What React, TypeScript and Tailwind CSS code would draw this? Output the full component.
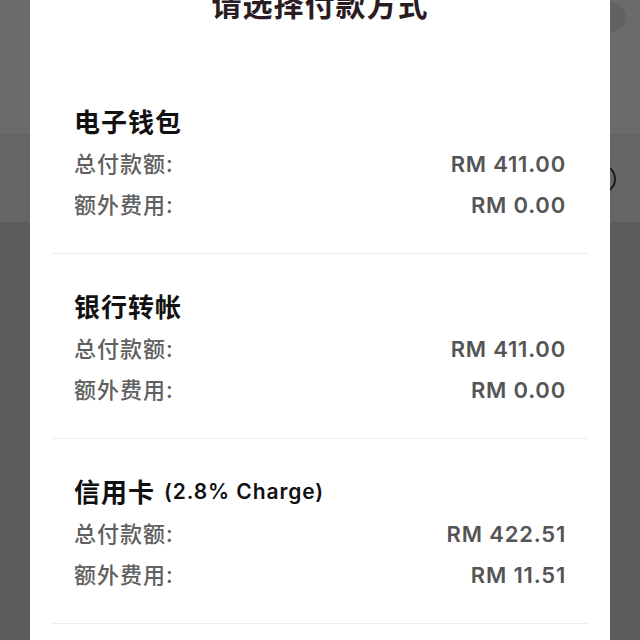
import React from "react";

const methods = [
  { name: "电子钱包", note: "", total: "RM 411.00", fee: "RM 0.00" },
  { name: "银行转帐", note: "", total: "RM 411.00", fee: "RM 0.00" },
  { name: "信用卡", note: "(2.8% Charge)", total: "RM 422.51", fee: "RM 11.51" },
];

export default function App() {
  return (
    <div
      className="relative w-[640px] h-[640px] overflow-hidden bg-[#5c5c5c]"
      style={{ fontFamily: "Inter, 'Noto Sans CJK SC', sans-serif" }}
    >
      {/* page behind the overlay */}
      <div className="h-[135px] bg-[#6b6b6b] border-b border-[#5e5e5e]" />
      <div className="h-[87px] bg-[#666666]" />

      <div className="absolute left-[586px] top-[164px] w-[30px] h-[30px] rounded-full border-2 border-[#1a1a1a]" />
      <div className="absolute left-[596px] top-[2px] w-[30px] h-[30px] rounded-full bg-[#626262]" />

      {/* payment sheet */}
      <div className="absolute left-[30px] top-0 w-[580px] h-[700px] bg-white px-[22px]">
        <div className="-mt-[15px] h-[40px] flex items-center justify-center text-[30px] font-semibold text-[#2b1b22] tracking-[1px]">
          请选择付款方式
        </div>

        {methods.map((m, i) => (
          <div
            key={m.name}
            className={`px-[22px] pb-[27px] border-b border-[#ececec] ${i === 0 ? "pt-[81px]" : "pt-[37px]"}`}
          >
            <div className="h-8 flex items-center gap-[9px] text-[#111]">
              <span className="text-[26px] font-semibold tracking-[1px]">{m.name}</span>
              {m.note && <span className="text-[21px] font-semibold tracking-[0.9px]">{m.note}</span>}
            </div>
            <div className="mt-[6px] h-[41px] flex items-center justify-between">
              <span className="text-[22px] font-medium text-[#606060] tracking-[1px]">总付款额:</span>
              <span className="text-[22px] font-semibold text-[#555] tracking-[0.8px]">{m.total}</span>
            </div>
            <div className="h-[41px] flex items-center justify-between">
              <span className="text-[22px] font-medium text-[#606060] tracking-[1px]">额外费用:</span>
              <span className="text-[22px] font-semibold text-[#555] tracking-[0.8px]">{m.fee}</span>
            </div>
          </div>
        ))}
      </div>
    </div>
  );
}
